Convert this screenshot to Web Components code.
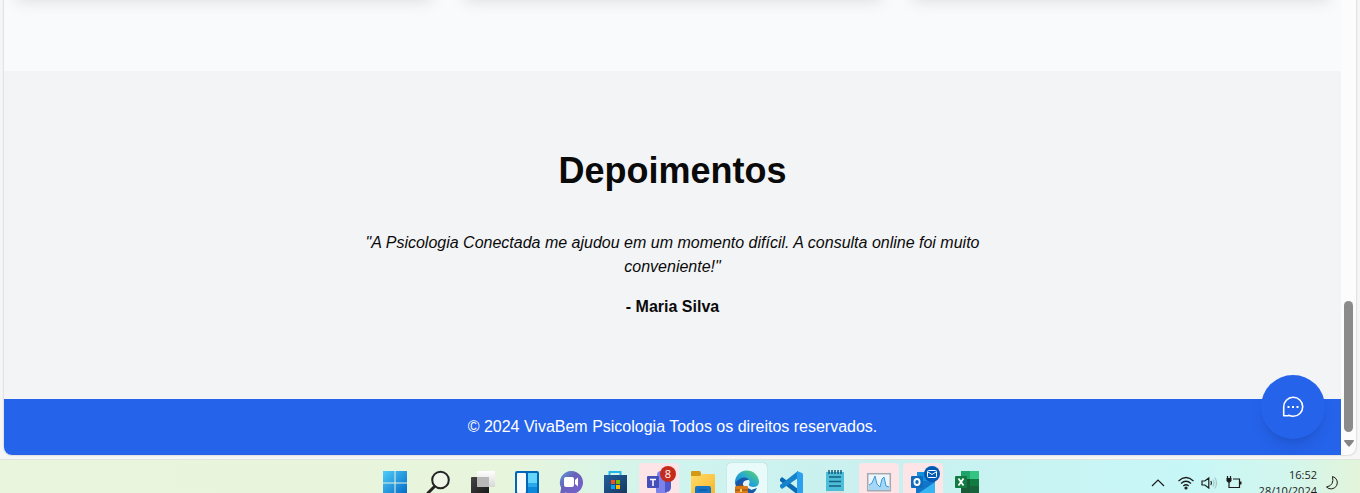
<!DOCTYPE html>
<html lang="pt-BR">
<head>
<meta charset="utf-8">
<title>VivaBem Psicologia</title>
<style>
html,body{height:100%}
body{margin:0;overflow:hidden;display:flex;flex-direction:column;background:#f6f6f6;color:#0a0a0a;font-family:"Liberation Sans",Arial,sans-serif;font-size:16px;line-height:24px}
</style>
</head>
<body>
<browser-frame>
  <service-cards></service-cards>
  <testimonial-section>
    <span slot="title">Depoimentos</span>
    <span slot="quote">"A Psicologia Conectada me ajudou em um momento difícil. A consulta online foi muito conveniente!"</span>
    <span slot="author">- Maria Silva</span>
  </testimonial-section>
  <site-footer>© 2024 VivaBem Psicologia Todos os direitos reservados.</site-footer>
  <chat-button slot="overlay"></chat-button>
</browser-frame>
<task-bar>
  <task-item label="Iniciar"><svg viewBox="0 0 24 24"><defs><linearGradient id="w" x1="0" y1="0" x2="24" y2="24" gradientUnits="userSpaceOnUse"><stop stop-color="#4fcdfa"/><stop offset="1" stop-color="#0067c5"/></linearGradient></defs><path fill="url(#w)" d="M0 0h11.500v11.500H0zM12.500 0H24v11.500H12.500zM0 12.500h11.500V24H0zM12.500 12.500H24V24H12.500z"/></svg></task-item>
  <task-item label="Pesquisar"><svg viewBox="0 0 24 24"><circle cx="13.500" cy="9" r="8.300" fill="#eef6e8" stroke="#242424" stroke-width="2"/><path d="M7.500 15.500 1 22" stroke="#242424" stroke-width="3" stroke-linecap="round"/></svg></task-item>
  <task-item label="Visão de tarefas"><svg viewBox="0 0 24 24"><defs><linearGradient id="tv" x2="1" y2="1"><stop stop-color="#444"/><stop offset="1" stop-color="#181818"/></linearGradient><linearGradient id="tw" x2="0" y2="1"><stop stop-color="#fff"/><stop offset="1" stop-color="#d8d8d8"/></linearGradient></defs><rect y="6" width="18" height="17" rx="1" fill="url(#tv)"/><rect x="6" width="18" height="16" rx="1" fill="url(#tw)"/><path fill="#b8b8b8" d="M6 6h12v10H7q-1 0-1-1z"/></svg></task-item>
  <task-item label="Widgets"><svg viewBox="0 0 24 24"><rect width="24" height="24" rx="2" fill="#0067b8"/><rect x="2" y="2" width="9" height="20" rx="1" fill="#f7f9fb"/><path fill="#66d5fb" d="M13 2h9v10h-9z"/><path fill="#28a8ea" d="M13 12h9v4h-9z"/><path fill="#0b87dc" d="M13 16h9v6h-9z"/></svg></task-item>
  <task-item label="Chat"><svg viewBox="0 0 24 24"><defs><linearGradient id="ch" x2="1" y2="1"><stop stop-color="#5aa0d6"/><stop offset=".4" stop-color="#6762b9"/><stop offset="1" stop-color="#7a5fd0"/></linearGradient></defs><path d="M12.500 0a11.500 11.500 0 1 1-5.500 21.600L1 23l1.200-6A11.500 11.500 0 0 1 12.500 0z" fill="url(#ch)"/><rect x="5" y="6" width="10" height="10" rx="2" fill="#fff"/><path d="m16 9 3-2.500v9L16 13z" fill="#fff"/></svg></task-item>
  <task-item label="Microsoft Store"><svg viewBox="0 0 24 24"><defs><linearGradient id="st" x2="1" y2="1"><stop stop-color="#205f9e"/><stop offset="1" stop-color="#17365b"/></linearGradient></defs><path d="M6.500 6V1h11v5" fill="none" stroke="#24b8e8" stroke-width="2"/><path d="M1 4h23v17q0 3-3 3H4q-3 0-3-3z" fill="url(#st)"/><path fill="#f25022" d="M8 9h4v4H8z"/><path fill="#7fba00" d="M13 9h4v4h-4z"/><path fill="#00a4ef" d="M8 14h4v4H8z"/><path fill="#ffb900" d="M13 14h4v4h-4z"/></svg></task-item>
  <task-item label="Teams" class="alert" badge="8"><svg viewBox="0 0 24 24"><circle cx="14" cy="4" r="4" fill="#7b83eb"/><rect x="9" y="8" width="11" height="16" rx="4" fill="#7b83eb"/><path d="M18 9h6v7q0 5-5 5h-1z" fill="#5059c9"/><rect y="5" width="12" height="12" rx="1" fill="#464eb8"/><path d="M3 8.500h6M6 8.500V15" stroke="#fff" stroke-width="1.500"/></svg></task-item>
  <task-item label="Explorador de Arquivos"><svg viewBox="0 0 24 24"><defs><linearGradient id="fo" x2="1" y2="1"><stop stop-color="#ffdb68"/><stop offset="1" stop-color="#f8b62c"/></linearGradient></defs><path d="M0 1q0-1 1-1h8l1 2v4H0z" fill="#d49a16"/><path d="M0 5h9l2-2h12q1 0 1 1v20H0z" fill="url(#fo)"/><path d="M4 24v-7q0-2 2-2h12q2 0 2 2v7z" fill="#1472c4"/><path d="M8 19h8" stroke="#0b4f93"/></svg></task-item>
  <task-item label="Microsoft Edge" class="active"><svg viewBox="0 0 24 24"><defs><linearGradient id="ed" x1="0" y1="1" x2="1" y2="0"><stop stop-color="#1583d0"/><stop offset=".5" stop-color="#27a9cf"/><stop offset="1" stop-color="#62d85a"/></linearGradient></defs><path d="M0 12A12 12 0 0 1 12 2q4 0 5 4l-6 5 5 8 6-2Q19 24 12 24 3 24 0 12z" fill="#1559a8"/><path d="M0 12A12 12 0 0 1 24 11q0 5-6 5-5 0-4-3 1-2 0-4Q9 3 0 12z" fill="url(#ed)"/><path d="M8 15q-1-6 5-6 2 1 1 4-1 3 4 3l-3 2z" fill="#e8f4f8"/><path d="M4 16v-2h4v2" fill="none" stroke="#8d4b13"/><rect y="15" width="13" height="9" rx="1" fill="#d97b18"/><path d="M0 19h13" stroke="#8d4b13"/><path fill="#ffd052" d="M5 18h2v3H5z"/></svg></task-item>
  <task-item label="Visual Studio Code"><svg viewBox="0 0 24 24"><path d="m1 8 2-2 16 12v6L1 10z" fill="#0b6bb2"/><path d="m1 16 2 2L19 7V0L1 14z" fill="#1684cc"/><path d="m18 0 5 2q1 0 1 2v17q0 1-1 2l-5 1z" fill="#2aa0ee"/></svg></task-item>
  <task-item label="Bloco de Notas"><svg viewBox="0 0 24 24"><path d="M3 1h18v19H3z" fill="#4dbdd8"/><path d="M3 20h18v3H3z" fill="#dedede"/><path d="M6 -1v4m3-4v4m3-4v4m3-4v4m3-4v4" stroke="#145a77" stroke-width="1.500"/><path d="M6 6h12M6 10.500h12M6 15h12" stroke="#155f80" stroke-width="1.700"/></svg></task-item>
  <task-item label="Monitor de Desempenho" class="alert"><svg viewBox="0 0 24 24"><rect x=".7" y="2.700" width="22.600" height="17" fill="#eef5fb" stroke="#a2a9b0" stroke-width="1.500"/><path d="M2 19v-5l3-2 3-7 2 8 3 3 2-8 2-2 2 9 3 1v3z" fill="#a5d7f7"/><path d="m2 14 3-2 3-7 2 8 3 3 2-8 2-2 2 9 3 1" fill="none" stroke="#3a99dc"/></svg></task-item>
  <task-item label="Outlook" class="alert" mail><svg viewBox="0 0 24 24"><path d="M6 1h13v9H6z" fill="#1490df"/><path d="M5 10h19v14H5z" fill="#1275ca"/><path d="m5 24 19-13v13z" fill="#35b5f1"/><rect y="5" width="12" height="12" rx="1" fill="#0f6cbd"/><ellipse cx="6" cy="11" rx="2.600" ry="3" fill="none" stroke="#fff" stroke-width="1.800"/></svg></task-item>
  <task-item label="Excel"><svg viewBox="0 0 24 24"><path fill="#20a366" d="M6 0h9v8H6z"/><path fill="#33c481" d="M15 0h9v8h-9z"/><path fill="#185c37" d="M6 8h9v16H6z"/><path fill="#107c41" d="M15 8h9v7h-9z"/><path fill="#17643b" d="M15 15h9v9h-9z"/><rect y="5" width="12" height="12" rx="1" fill="#107c41"/><path d="m3.500 7.500 5 7m0-7-5 7" stroke="#fff" stroke-width="1.800"/></svg></task-item>
</task-bar>
<script>
function define(name, html, setup) {
  customElements.define(name, class extends HTMLElement {
    constructor() {
      super();
      this.attachShadow({mode: 'open'}).innerHTML = html;
    }
    connectedCallback() { if (setup) setup(this, this.shadowRoot); }
  });
}

define('browser-frame', `<style>
:host{flex:1;min-height:0;display:flex;padding:0 4px 4px;box-sizing:border-box}
.window{flex:1;min-width:0;display:flex;overflow:hidden;background:#fcfcfc;border-radius:0 0 8px 8px;box-shadow:0 0 2px #0000004d}
main{flex:1;min-width:0;position:relative;overflow:hidden;display:flex;flex-direction:column;justify-content:flex-end;background:#f9fafc}
.scroll{width:15px;box-sizing:border-box;display:flex;flex-direction:column;justify-content:flex-end;align-items:center;padding-bottom:8px;gap:8px}
.thumb{width:9px;height:131px;border-radius:5px;background:#8b8b8b}
svg{display:block;flex:none}
.overlay{position:absolute;right:16px;bottom:16px}
</style><div class="window"><main><slot></slot><div class="overlay"><slot name="overlay"></slot></div></main>
<div class="scroll"><div class="thumb"></div><svg width="10" height="7" viewBox="0 0 10 7"><path d="M1 0h8q1 0 1 1L6 6q-1 1-2 0L0 1q0-1 1-1z" fill="#858585"/></svg></div></div>`);

define('service-cards', `<style>
:host{flex:none;display:grid;grid-template-columns:repeat(3,1fr);gap:24px;padding:0 8px 76px}
div{height:120px;border-radius:8px;background:#fff;box-shadow:0 10px 15px -3px #0000001a,0 4px 6px -4px #0000001a}
</style><div></div><div></div><div></div>`);

define('testimonial-section', `<style>
:host{flex:none;display:block;padding:80px 16px;background:#f3f4f6;text-align:center}
h2{margin:0 0 40px;font-size:36px;line-height:40px;font-weight:700}
blockquote{margin:0 auto;max-width:672px}
p{margin:0 0 16px;font-style:italic}
footer{font-weight:700}
</style><section><h2><slot name="title"></slot></h2><blockquote><p><slot name="quote"></slot></p><footer><slot name="author"></slot></footer></blockquote></section>`);

define('site-footer', `<style>
:host{flex:none;display:block;padding:16px;background:#2563eb;color:#fff;text-align:center}
</style><footer><slot></slot></footer>`);

define('chat-button', `<style>
:host{display:block}
button{width:64px;height:64px;padding:0;border:0;border-radius:50%;display:grid;place-items:center;background:#2563eb;color:#fff;box-shadow:0 10px 15px -3px #0000001a,0 4px 6px -4px #0000001a}
</style><button aria-label="Abrir chat"><svg width="24" height="24" viewBox="0 0 24 24" fill="none"><path d="M2.700 20.800V12a9.500 9.500 0 1 1 9.500 9.300q-2.500 0-4.500-1-.6.500-1.200.5z" stroke="currentColor" stroke-width="1.600" stroke-linejoin="round"/><path d="M6.500 11h2v2h-2zm4.500 0h2v2h-2zm4.500 0h2v2h-2z" fill="currentColor"/></svg></button>`);

define('task-item', `<style>
:host{display:block;position:relative}
button{width:40px;height:40px;padding:8px;border:0;border-radius:4px;background:none}
:host(.alert) button{background:#fde5e7}
:host(.active) button{background:#e9fafa;box-shadow:0 0 1px #0000004d}
::slotted(svg){display:block;width:24px;height:24px;overflow:visible}
.badge{position:absolute;right:3px;top:3px;width:16px;height:16px;border-radius:50%;display:grid;place-items:center;background:#c42b1c;color:#fff;font:11px/16px "Open Sans",sans-serif}
.mail{background:#0059b3}
</style><button><slot></slot></button>`, (host, root) => {
  root.querySelector('button').setAttribute('aria-label', host.getAttribute('label'));
  const badge = document.createElement('span');
  badge.className = 'badge';
  if (host.hasAttribute('badge')) {
    badge.textContent = host.getAttribute('badge');
    root.append(badge);
  } else if (host.hasAttribute('mail')) {
    badge.classList.add('mail');
    badge.innerHTML = '<svg width="10" height="8" viewBox="0 0 10 8" fill="none" stroke="#fff"><rect x=".5" y=".5" width="9" height="7" rx="1"/><path d="m1 2 4 2.500L9 2"/></svg>';
    root.append(badge);
  }
});

define('task-bar', `<style>
:host{flex:none;height:34px;box-sizing:border-box;overflow:hidden;display:grid;grid-template-columns:1fr auto 1fr;align-items:start;padding:3px 19px 0 21px;border-top:1px solid #dde5dc;background:linear-gradient(90deg,#e9f5dc 0%,#e7f5dc 38%,#d0f4ee 49%,#c9f0f0 65%,#c8f7f7 88%,#d3f6ec 95%,#e3f4da 100%);color:#1c1c1c}
nav{grid-column:2;display:flex;gap:4px}
.tray{display:flex;justify-content:flex-end;align-items:center;height:40px;gap:8px}
svg{display:block;flex:none;fill:none;stroke:currentColor;stroke-width:1.200}
.clock{font:11px/16px "Open Sans",sans-serif;text-align:right;margin-left:8px}
time{display:block}
</style><nav><slot></slot></nav><div class="tray">
<svg width="16" height="16" viewBox="0 0 16 16"><path d="m1 11 6-6 6 6"/></svg>
<svg style="margin-left:4px" width="16" height="16" viewBox="0 0 16 16"><path d="M-.5 6q7.500-7 15 0M2 8.500q5-4.500 10 0M4.300 11q2.700-2.500 5.400 0"/><circle cx="7" cy="13" r="1" fill="currentColor"/></svg>
<svg width="16" height="16" viewBox="0 0 16 16"><path d="M-1 6v4h2.800L5.800 13V3L1.800 6zM7.800 6q1.500 2 0 4"/><path d="M9.800 4.500q2.500 3.500 0 7M11.800 2.500q3.500 5.500 0 11" stroke="#a5c8c7"/></svg>
<svg width="16" height="16" viewBox="0 0 16 16"><path d="M.5 1v3m3-3v3M2 7v5.500h10.500V4H6"/><path d="M-.5 3h5v3L3 7.500H1L-.5 6zM13 6.500h1.500v3H13z" fill="currentColor" stroke="none"/></svg>
<div class="clock"><time datetime="16:52">16:52</time><time datetime="2024-10-28">28/10/2024</time></div>
<svg width="16" height="16" viewBox="0 0 16 16"><path stroke-width="1" d="M7.500 1.500a6.300 6.300 0 1 1-6 10.500Q9.500 10.500 7.500 1.500z"/></svg>
</div>
<style>.tray svg{overflow:visible}</style>`);
</script>
</body>
</html>
